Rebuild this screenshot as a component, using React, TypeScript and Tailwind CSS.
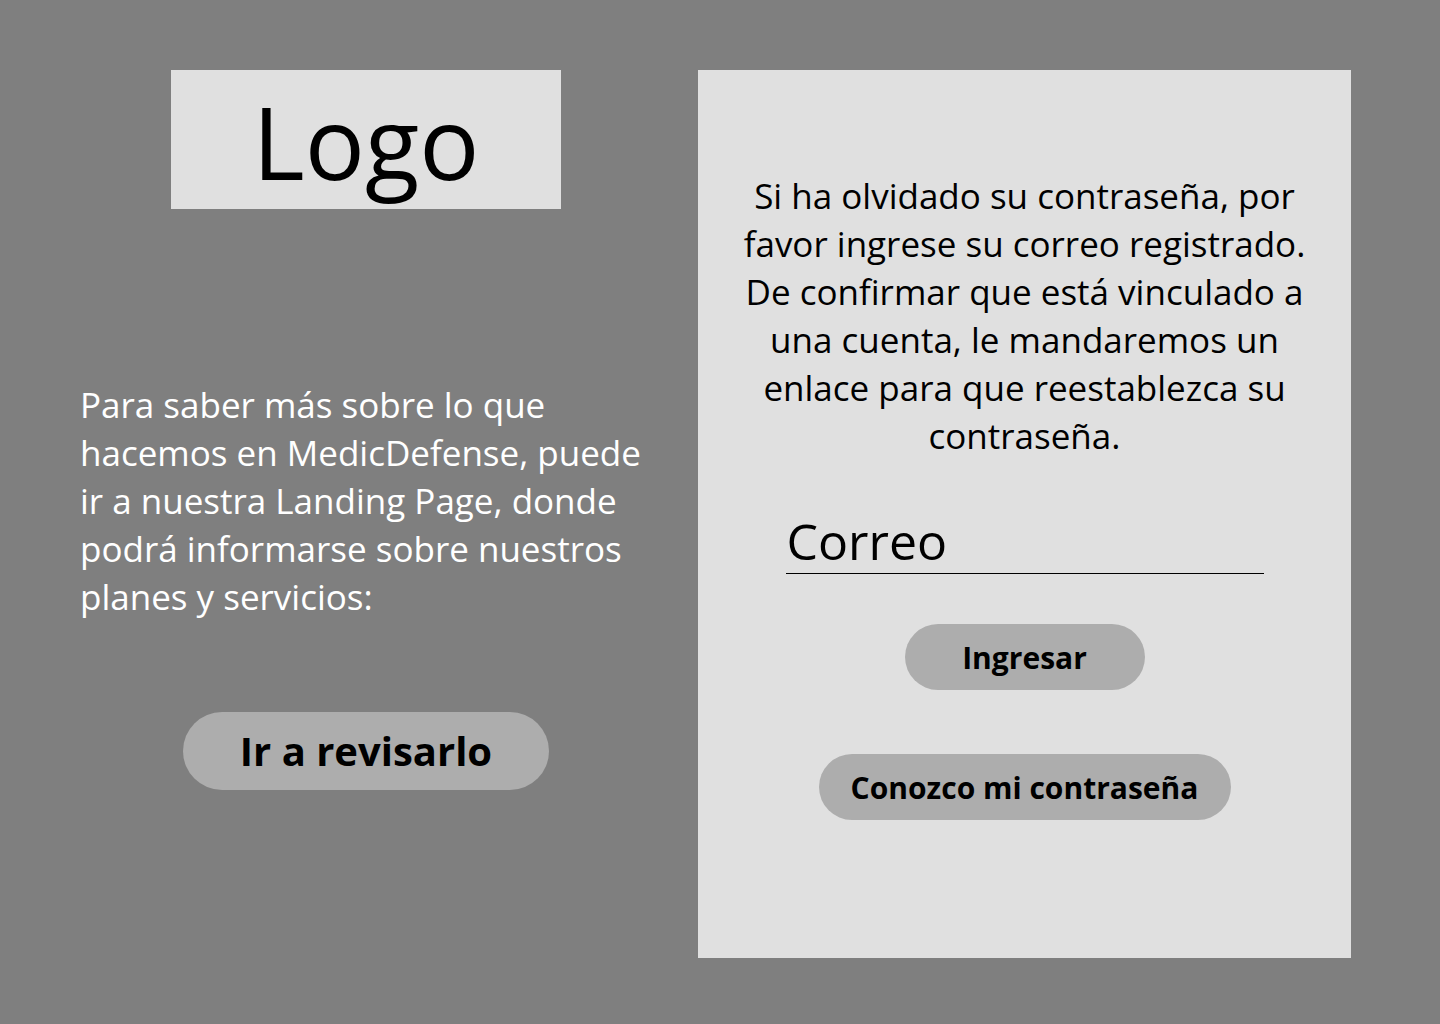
export default function App() {
  return (
    <div className="w-[1440px] h-[1024px] bg-[#7f7f7f] flex items-start gap-[46px] pt-[70px] pl-[80px] font-['Open_Sans',sans-serif]">
      {/* left column */}
      <div className="w-[572px] flex flex-col items-center">
        <div className="w-[390px] h-[139px] bg-[#e0e0e0] flex items-center justify-center pt-[3px]">
          <span className="text-[100px] leading-[100px] text-black">Logo</span>
        </div>
        <p className="mt-[172px] w-full text-[35px] leading-[48px] text-white">
          Para saber más sobre lo que hacemos en MedicDefense, puede ir a nuestra Landing Page, donde podrá informarse sobre nuestros planes y servicios:
        </p>
        <button className="mt-[91px] w-[366px] h-[78px] rounded-full bg-[#adadad] flex items-center justify-center text-[40px] font-bold text-black">
          Ir a revisarlo
        </button>
      </div>

      {/* right panel */}
      <div className="w-[653px] h-[888px] bg-[#e0e0e0] flex flex-col items-center pt-[102px]">
        <p className="w-[580px] text-center text-[35px] leading-[48px] text-black">
          Si ha olvidado su contraseña, por favor ingrese su correo registrado. De confirmar que está vinculado a una cuenta, le mandaremos un enlace para que reestablezca su contraseña.
        </p>
        <div className="mt-[51px] w-[478px] border-b border-black pb-[2px]">
          <span className="block text-[50px] leading-[60px] text-black pl-[1px]">Correo</span>
        </div>
        <button className="mt-[50px] w-[240px] h-[66px] rounded-full bg-[#adadad] flex items-center justify-center text-[30px] font-bold text-black">
          Ingresar
        </button>
        <button className="mt-[64px] w-[412px] h-[66px] rounded-full bg-[#adadad] flex items-center justify-center text-[30px] font-bold text-black">
          Conozco mi contraseña
        </button>
      </div>
    </div>
  );
}
